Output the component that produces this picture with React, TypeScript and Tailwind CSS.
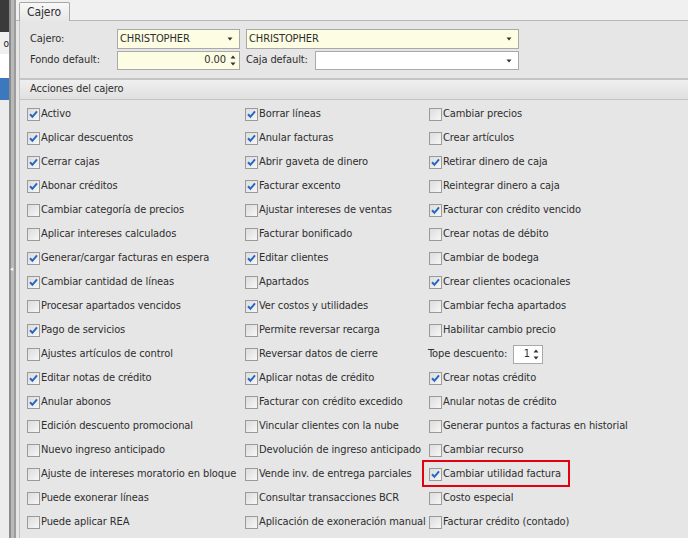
import React from "react";

type Item = { label: string; checked?: boolean; kind?: "spin"; mark?: boolean };

const col1: Item[] = [
	{ label: "Activo", checked: true },
	{ label: "Aplicar descuentos", checked: true },
	{ label: "Cerrar cajas", checked: true },
	{ label: "Abonar créditos", checked: true },
	{ label: "Cambiar categoría de precios" },
	{ label: "Aplicar intereses calculados" },
	{ label: "Generar/cargar facturas en espera", checked: true },
	{ label: "Cambiar cantidad de líneas", checked: true },
	{ label: "Procesar apartados vencidos" },
	{ label: "Pago de servicios", checked: true },
	{ label: "Ajustes artículos de control" },
	{ label: "Editar notas de crédito", checked: true },
	{ label: "Anular abonos", checked: true },
	{ label: "Edición descuento promocional" },
	{ label: "Nuevo ingreso anticipado" },
	{ label: "Ajuste de intereses moratorio en bloque" },
	{ label: "Puede exonerar líneas" },
	{ label: "Puede aplicar REA" },
];

const col2: Item[] = [
	{ label: "Borrar líneas", checked: true },
	{ label: "Anular facturas", checked: true },
	{ label: "Abrir gaveta de dinero", checked: true },
	{ label: "Facturar excento", checked: true },
	{ label: "Ajustar intereses de ventas" },
	{ label: "Facturar bonificado" },
	{ label: "Editar clientes", checked: true },
	{ label: "Apartados" },
	{ label: "Ver costos y utilidades", checked: true },
	{ label: "Permite reversar recarga" },
	{ label: "Reversar datos de cierre" },
	{ label: "Aplicar notas de crédito", checked: true },
	{ label: "Facturar con crédito excedido" },
	{ label: "Vincular clientes con la nube" },
	{ label: "Devolución de ingreso anticipado" },
	{ label: "Vende inv. de entrega parciales" },
	{ label: "Consultar transacciones BCR" },
	{ label: "Aplicación de exoneración manual" },
];

const col3: Item[] = [
	{ label: "Cambiar precios" },
	{ label: "Crear artículos" },
	{ label: "Retirar dinero de caja", checked: true },
	{ label: "Reintegrar dinero a caja" },
	{ label: "Facturar con crédito vencido", checked: true },
	{ label: "Crear notas de débito" },
	{ label: "Cambiar de bodega" },
	{ label: "Crear clientes ocacionales", checked: true },
	{ label: "Cambiar fecha apartados" },
	{ label: "Habilitar cambio precio" },
	{ label: "Tope descuento:", kind: "spin" },
	{ label: "Crear notas crédito", checked: true },
	{ label: "Anular notas de crédito" },
	{ label: "Generar puntos a facturas en historial" },
	{ label: "Cambiar recurso" },
	{ label: "Cambiar utilidad factura", checked: true, mark: true },
	{ label: "Costo especial" },
	{ label: "Facturar crédito (contado)" },
];

const DownArrow = () => (
	<svg width="6" height="4" viewBox="0 0 6 4">
		<path d="M0.5 0.5h5L3 3.5z" fill="#333" />
	</svg>
);

const SpinArrows = () => (
	<div className="flex flex-col items-center gap-[3px]">
		<svg width="6" height="4" viewBox="0 0 6 4">
			<path d="M0.5 3.5h5L3 0.5z" fill="#333" />
		</svg>
		<svg width="6" height="4" viewBox="0 0 6 4">
			<path d="M0.5 0.5h5L3 3.5z" fill="#333" />
		</svg>
	</div>
);

const CheckBox = ({ checked }: { checked?: boolean }) => (
	<span className="w-[13px] h-[13px] shrink-0 border border-[#9a9a9a] bg-gradient-to-br from-[#dcdcdc] to-[#f7f7f7] flex items-center justify-center">
		{checked && (
			<svg width="9" height="9" viewBox="0 0 9 9">
				<path d="M1 4.3 L3.4 6.8 L8 1.4" fill="none" stroke="#2767c4" strokeWidth="2" />
			</svg>
		)}
	</span>
);

const Row = ({ item }: { item: Item }) => {
	if (item.kind === "spin") {
		return (
			<div className="h-6 flex items-center">
				<span className="w-[85px] -ml-[1px] whitespace-nowrap">{item.label}</span>
				<div className="w-[30px] h-[19px] bg-white border border-[#a8a8a8] flex items-center justify-end gap-[3px] pr-[3px]">
					<span>1</span>
					<SpinArrows />
				</div>
			</div>
		);
	}
	return (
		<div className="relative h-6 flex items-center gap-[1px]">
			<CheckBox checked={item.checked} />
			<span className="whitespace-nowrap">{item.label}</span>
			{item.mark && (
				<span className="absolute left-[-7px] top-[-2px] w-[148px] h-[27px] border-2 border-[#e3000f]" />
			)}
		</div>
	);
};

const App = () => {
	return (
		<div
			className="w-[688px] h-[538px] overflow-hidden flex bg-[#e6e6e6] text-[11px] tracking-[-0.1px] text-[#2e2e2e]"
			style={{ fontFamily: '"DejaVu Sans Condensed", "DejaVu Sans", sans-serif' }}
		>
			{/* left strip from the neighbouring window */}
			<div className="w-[9px] flex flex-col bg-[#ececec]">
				<div className="h-[32px] bg-[#3a3a3a]" />
				<div className="h-[22px] bg-[#f0f0f0] flex items-center justify-end text-[#222] overflow-hidden">
					<span className="text-[10px]">o</span>
				</div>
				<div className="h-[24px] bg-white" />
				<div className="h-[22px] bg-[#3b78bd]" />
				<div className="flex-1 bg-[#ececec]" />
			</div>
			{/* splitter */}
			<div className="w-[7px] flex">
				<div className="w-[2px] bg-[#8c8c8c]" />
				<div className="w-[3px] bg-[#b9b9b9] flex items-center">
					<span className="text-[7px] text-[#f4f4f4] leading-none -ml-[1px]">◂</span>
				</div>
				<div className="w-[2px] bg-[#9c9c9c]" />
			</div>
			{/* main */}
			<div className="flex-1 flex flex-col">
				<div className="h-[21px] bg-[#f0f0f0] flex items-end border-b border-[#b8b8b8]">
					<div className="ml-[3px] h-[19px] w-[51px] -mb-[1px] border border-b-0 border-[#a6a6a6] rounded-t-[2px] bg-gradient-to-b from-[#f8f8f8] to-[#e7e7e7] flex items-center pl-[7px] text-[12px]">
						Cajero
					</div>
				</div>
				<div className="flex-1 flex flex-col ml-[3px] border-l border-[#c4c4c4] bg-[#e6e6e6]">
					<div className="pt-[8px] pb-[8px] pl-[10px] flex flex-col gap-[2px]">
						<div className="flex items-center h-[20px]">
							<span className="w-[87px]">Cajero:</span>
							<div className="w-[123px] h-[20px] bg-[#fdfde4] border border-[#a9a9a9] flex items-center justify-between pl-[2px] pr-[6px]">
								<span>CHRISTOPHER</span>
								<DownArrow />
							</div>
							<div className="ml-[6px] w-[273px] h-[20px] bg-[#fdfde4] border border-[#a9a9a9] flex items-center justify-between pl-[2px] pr-[6px]">
								<span>CHRISTOPHER</span>
								<DownArrow />
							</div>
						</div>
						<div className="flex items-center h-[19px]">
							<span className="w-[87px]">Fondo default:</span>
							<div className="w-[123px] h-[19px] bg-[#fdfde4] border border-[#a9a9a9] flex items-center justify-end gap-[4px] pr-[3px]">
								<span>0.00</span>
								<SpinArrows />
							</div>
							<span className="ml-[6px] w-[69px]">Caja default:</span>
							<div className="w-[204px] h-[19px] bg-white border border-[#a9a9a9] flex items-center justify-end pr-[6px]">
								<DownArrow />
							</div>
						</div>
					</div>
					<div className="h-[22px] border-t-2 border-b border-t-[#c4c4c4] border-b-[#c2c2c2] bg-gradient-to-b from-[#efefef] to-[#e0e0e0] flex items-center pl-[10px]">
						Acciones del cajero
					</div>
					<div className="pt-[2px] pl-[7px] grid grid-cols-[218px_184px_1fr]">
						<div className="flex flex-col">
							{col1.map((it) => (
								<Row key={it.label} item={it} />
							))}
						</div>
						<div className="flex flex-col">
							{col2.map((it) => (
								<Row key={it.label} item={it} />
							))}
						</div>
						<div className="flex flex-col">
							{col3.map((it) => (
								<Row key={it.label} item={it} />
							))}
						</div>
					</div>
				</div>
			</div>
		</div>
	);
};

export default App;
